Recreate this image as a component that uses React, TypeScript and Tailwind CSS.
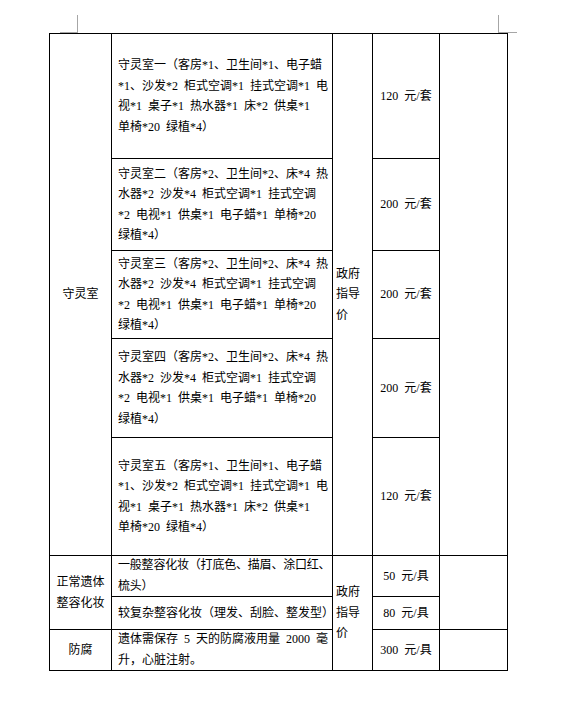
const roomRows = [
  {
    lines: [
      "守灵室一（客房*1、卫生间*1、电子蜡",
      "*1、沙发*2 柜式空调*1 挂式空调*1 电",
      "视*1 桌子*1 热水器*1 床*2 供桌*1",
      "单椅*20 绿植*4）",
    ],
    price: "120 元/套",
  },
  {
    lines: [
      "守灵室二（客房*2、卫生间*2、床*4 热",
      "水器*2 沙发*4 柜式空调*1 挂式空调",
      "*2 电视*1 供桌*1 电子蜡*1 单椅*20",
      "绿植*4）",
    ],
    price: "200 元/套",
  },
  {
    lines: [
      "守灵室三（客房*2、卫生间*2、床*4 热",
      "水器*2 沙发*4 柜式空调*1 挂式空调",
      "*2 电视*1 供桌*1 电子蜡*1 单椅*20",
      "绿植*4）",
    ],
    price: "200 元/套",
  },
  {
    lines: [
      "守灵室四（客房*2、卫生间*2、床*4 热",
      "水器*2 沙发*4 柜式空调*1 挂式空调",
      "*2 电视*1 供桌*1 电子蜡*1 单椅*20",
      "绿植*4）",
    ],
    price: "200 元/套",
  },
  {
    lines: [
      "守灵室五（客房*1、卫生间*1、电子蜡",
      "*1、沙发*2 柜式空调*1 挂式空调*1 电",
      "视*1 桌子*1 热水器*1 床*2 供桌*1",
      "单椅*20 绿植*4）",
    ],
    price: "120 元/套",
  },
];

const cell = "bg-white flex items-center";
const textCell = `${cell} pl-[6px]`;
const centerCell = `${cell} justify-center`;

const GovPrice = () => (
  <div className={`${cell} pl-[3px]`}>
    <div>
      <div>政府</div>
      <div>指导</div>
      <div>价</div>
    </div>
  </div>
);

const Lines = ({ lines }: { lines: string[] }) => (
  <div className="whitespace-nowrap">
    {lines.map((l, i) => (
      <div key={i}>{l}</div>
    ))}
  </div>
);

export default function App() {
  return (
    <div className="min-h-[723px] w-[577px] bg-white text-[12px] leading-[20.5px] text-black [word-spacing:3px] font-['Liberation_Serif','Noto_Sans_CJK_SC',serif]">
      {/* page corner marks */}
      <div className="flex h-[33px]">
        <div className="ml-[60px] mt-[15px] h-[18px] w-[18px] border-b border-r border-[#a6a6a6]" />
        <div className="ml-[420px] mt-[15px] h-[18px] w-[19px] border-b border-l border-[#a6a6a6]" />
      </div>

      <div className="ml-[49px] grid w-[459px] grid-cols-[61px_220px_39px_66px_67px] grid-rows-[124px_91px_87px_98px_117px_40px_32px_40px] gap-px bg-black p-px">
        {/* 守灵室 block */}
        <div className={`${centerCell} row-span-5`}>守灵室</div>
        <div className={textCell}>
          <Lines lines={roomRows[0].lines} />
        </div>
        <div className="row-span-5 grid">
          <GovPrice />
        </div>
        <div className={centerCell}>{roomRows[0].price}</div>
        <div className="row-span-5 bg-white" />

        {roomRows.slice(1).map((row, r) => (
          <div key={r} className="contents">
            <div className={textCell}>
              <Lines lines={row.lines} />
            </div>
            <div className={centerCell}>{row.price}</div>
          </div>
        ))}

        {/* 整容化妆 */}
        <div className={`${centerCell} row-span-2 text-center`}>
          <div>
            <div>正常遗体</div>
            <div>整容化妆</div>
          </div>
        </div>
        <div className={`${textCell} leading-[21px]`}>
          <div className="whitespace-nowrap tracking-[-0.2px]">
            <div>一般整容化妆（打底色、描眉、涂口红、</div>
            <div>梳头）</div>
          </div>
        </div>
        <div className="row-span-3 grid">
          <GovPrice />
        </div>
        <div className={centerCell}>50 元/具</div>
        <div className="row-span-2 bg-white" />

        <div className={textCell}>
          <div className="whitespace-nowrap">
            较复杂整容化妆（理发、刮脸、整发型）
          </div>
        </div>
        <div className={centerCell}>80 元/具</div>

        {/* 防腐 */}
        <div className={centerCell}>防腐</div>
        <div className={`${textCell} leading-[21px]`}>
          <Lines lines={["遗体需保存 5 天的防腐液用量 2000 毫", "升，心脏注射。"]} />
        </div>
        <div className={centerCell}>300 元/具</div>
        <div className="bg-white" />
      </div>
    </div>
  );
}
